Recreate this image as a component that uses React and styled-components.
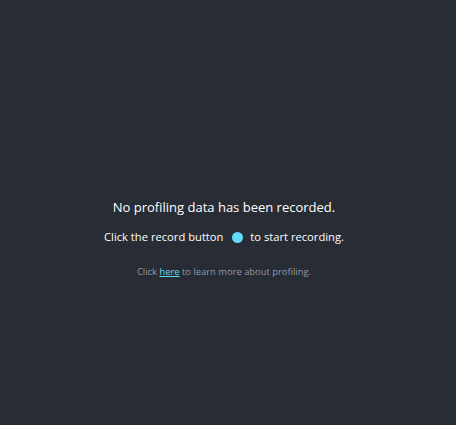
import styled, { createGlobalStyle } from 'styled-components';

const GlobalStyle = createGlobalStyle`
	html, body {
		margin: 0;
		padding: 0;
		height: 100%;
		background: #282c34;
	}
	#root {
		height: 100%;
	}
`;

function App() {
	return (
		<>
			<GlobalStyle />
			<EmptyState>
				<Header>No profiling data has been recorded.</Header>
				<Row>
					Click the record button <RecordDot /> to start recording.
				</Row>
				<LearnMore>
					Click <Link href="#">here</Link> to learn more about profiling.
				</LearnMore>
			</EmptyState>
		</>
	);
}

const EmptyState = styled.div`
	height: 100%;
	box-sizing: border-box;
	display: flex;
	flex-direction: column;
	align-items: center;
	justify-content: center;
	padding: 52px 8px 0 0;
	font-family: 'Open Sans', 'Noto Sans', sans-serif;
	color: #ffffff;
`;

const Header = styled.div`
	font-size: 13px;
	line-height: 18px;
	margin-bottom: 13px;
`;

const Row = styled.div`
	display: flex;
	align-items: center;
	font-size: 11.2px;
	line-height: 16px;
	white-space: pre;
`;

const RecordDot = styled.span`
	display: inline-block;
	width: 11px;
	height: 11px;
	border-radius: 50%;
	background: #61dafb;
	margin: 0 4px 0 6px;
`;

const LearnMore = styled.div`
	margin-top: 20px;
	font-size: 9.4px;
	line-height: 14px;
	color: #8f98a5;
`;

const Link = styled.a`
	color: #61dafb;
	text-decoration: underline;
`;

export default App;
